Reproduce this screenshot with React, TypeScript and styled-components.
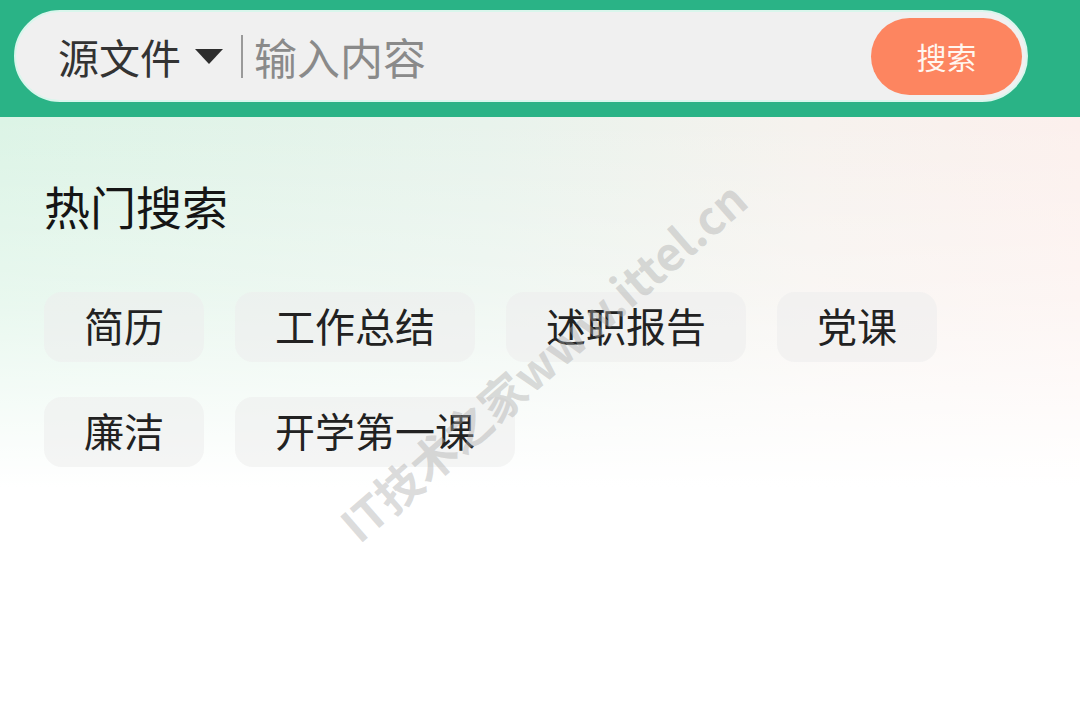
import React from 'react';
import styled, { createGlobalStyle } from 'styled-components';

const GlobalStyle = createGlobalStyle`
  html, body {
    margin: 0;
    padding: 0;
    background: #ffffff;
  }
  body {
    font-family: 'Noto Sans CJK SC', 'Noto Sans', sans-serif;
  }
`;

const Page = styled.div`
  position: relative;
  width: 1080px;
  height: 711px;
  overflow: hidden;
  background: #ffffff;
`;

const Header = styled.div`
  height: 117px;
  box-sizing: border-box;
  padding: 10px 52px 15px 14px;
  background: #2ab386;
`;

const SearchBar = styled.div`
  height: 92px;
  box-sizing: border-box;
  display: flex;
  align-items: center;
  padding: 0 4px 0 42px;
  border: 2px solid #d9f6ec;
  border-radius: 46px;
  background: #f0f0f0;
`;

const SourcePicker = styled.div`
  display: flex;
  align-items: center;
  gap: 14px;
  font-size: 41px;
  line-height: 1;
  color: #333333;
`;

const Divider = styled.span`
  width: 2px;
  height: 43px;
  margin: 0 11px 0 18px;
  background: #9a9a9a;
`;

const Placeholder = styled.span`
  flex: 1;
  font-size: 43px;
  line-height: 1;
  color: #8a8a8a;
`;

const SearchButton = styled.button`
  width: 151px;
  height: 77px;
  border: none;
  border-radius: 39px;
  background: #fd8560;
  color: #fff6ef;
  font-family: inherit;
  font-size: 30px;
  padding: 0;
`;

const Content = styled.div`
  height: 594px;
  box-sizing: border-box;
  padding: 65px 44px 0;
  background:
    linear-gradient(
      to bottom,
      rgba(255, 255, 255, 0) 0px,
      rgba(255, 255, 255, 0.35) 180px,
      #ffffff 370px
    ),
    linear-gradient(to right, #dcf4e6 0%, #e8f3ec 45%, #f6f2ee 75%, #fcf0ed 100%);
`;

const Title = styled.h2`
  margin: 0;
  font-size: 46px;
  font-weight: 400;
  line-height: 1;
  color: #151515;
`;

const TagList = styled.div`
  display: flex;
  flex-wrap: wrap;
  gap: 35px 31px;
  margin-top: 64px;
  width: 920px;
`;

const Tag = styled.div`
  height: 70px;
  padding: 0 40px;
  border-radius: 18px;
  background: rgba(236, 236, 236, 0.55);
  font-size: 40px;
  line-height: 66px;
  color: #222222;
  white-space: nowrap;
`;

const Watermark = styled.div`
  position: absolute;
  left: 542px;
  top: 360px;
  transform: translate(-50%, -50%) rotate(-41deg);
  font-size: 46px;
  font-weight: 700;
  color: rgba(170, 170, 170, 0.42);
  white-space: nowrap;
  pointer-events: none;
`;

const Caret = () => (
  <svg width="28" height="15" viewBox="0 0 28 15">
    <polygon points="0,0 28,0 14,15" fill="#2e2e2e" />
  </svg>
);

const tags = ['简历', '工作总结', '述职报告', '党课', '廉洁', '开学第一课'];

export default function App() {
  return (
    <Page>
      <GlobalStyle />
      <Header>
        <SearchBar>
          <SourcePicker>
            源文件
            <Caret />
          </SourcePicker>
          <Divider />
          <Placeholder>输入内容</Placeholder>
          <SearchButton>搜索</SearchButton>
        </SearchBar>
      </Header>
      <Content>
        <Title>热门搜索</Title>
        <TagList>
          {tags.map(t => (
            <Tag key={t}>{t}</Tag>
          ))}
        </TagList>
      </Content>
      <Watermark>IT技术之家www.ittel.cn</Watermark>
    </Page>
  );
}
